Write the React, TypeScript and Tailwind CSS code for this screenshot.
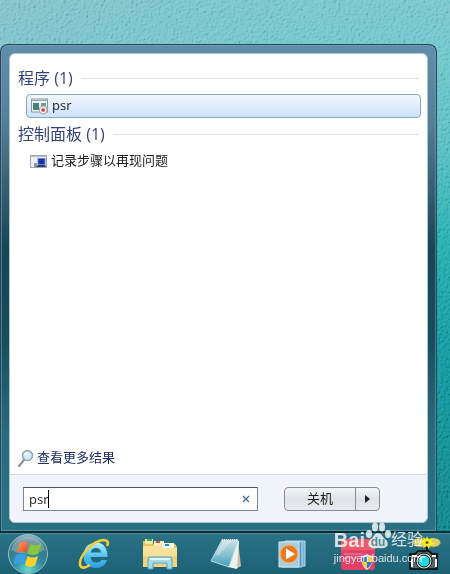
import { useState } from "react";

const cjk = "font-['Open_Sans','Noto_Sans_CJK_SC',sans-serif]";

function Wallpaper() {
  return (
    <svg aria-hidden="true" className="absolute inset-0 h-full w-full" preserveAspectRatio="none">
      <defs>
        <linearGradient id="sky" x1="0" y1="0" x2="0" y2="1">
          <stop offset="0" stopColor="#7cc6cb" />
          <stop offset="0.1" stopColor="#70c5ca" />
          <stop offset="0.25" stopColor="#58bdc2" />
          <stop offset="0.42" stopColor="#22abae" />
          <stop offset="0.6" stopColor="#0d949c" />
          <stop offset="1" stopColor="#087a80" />
        </linearGradient>
        <linearGradient id="haze" x1="0" y1="0" x2="1" y2="0">
          <stop offset="0" stopColor="#90bcc8" stopOpacity="0.4" />
          <stop offset="1" stopColor="#5cc8c8" stopOpacity="0.1" />
        </linearGradient>
        <filter id="grain" x="0" y="0" width="100%" height="100%">
          <feTurbulence type="fractalNoise" baseFrequency="0.4" numOctaves="3" seed="4" result="n" />
          <feDiffuseLighting in="n" surfaceScale="2.5" lightingColor="#b8b8b8">
            <feDistantLight azimuth="225" elevation="45" />
          </feDiffuseLighting>
        </filter>
      </defs>
      <rect width="100%" height="100%" fill="url(#sky)" />
      <rect width="100%" height="100%" fill="url(#haze)" />
      <rect width="100%" height="100%" filter="url(#grain)" opacity="0.6" className="mix-blend-soft-light" />
    </svg>
  );
}

function RecorderIcon() {
  return (
    <svg aria-hidden="true" viewBox="0 0 17 17" className="h-[17px] w-[17px] shrink-0">
      <rect x="0.5" y="1" width="16" height="13" fill="#f2f5f5" stroke="#8c989c" />
      <path d="M1 2.5h15" stroke="#9aa7ad" />
      <rect x="2" y="5" width="6" height="7" fill="#3f8579" />
      <path d="M10 5h5v3h-5z" fill="#63a096" />
      <circle cx="12.2" cy="12" r="4" fill="#f3eeee" stroke="#a7a1a2" />
      <circle cx="12.2" cy="12" r="1.8" fill="#d32f35" />
    </svg>
  );
}

function PanelIcon() {
  return (
    <svg aria-hidden="true" viewBox="0 0 17 15" className="h-[15px] w-[17px] shrink-0">
      <rect x="0.5" y="1.5" width="16" height="12" fill="#eceff4" stroke="#a1a7b2" />
      <path d="M1 2.5h15" stroke="#b4bac5" />
      <path d="M4 9h3v4H4z" fill="#8f98ab" />
      <rect x="8" y="4.5" width="7" height="6" fill="#1a2fb0" stroke="#6f86c9" />
      <path d="M6 13l2-2h7l1 2z" fill="#2c3867" />
    </svg>
  );
}

function StartOrb() {
  return (
    <svg aria-hidden="true" viewBox="0 0 42 42" className="h-[42px] w-[42px]">
      <defs>
        <radialGradient id="orb" cx="0.5" cy="0.9" r="0.95">
          <stop offset="0" stopColor="#62d8cf" />
          <stop offset="0.4" stopColor="#2f8b9c" />
          <stop offset="0.75" stopColor="#3f7686" />
          <stop offset="1" stopColor="#b7ced2" />
        </radialGradient>
        <linearGradient id="red" x1="0" y1="0" x2="1" y2="1">
          <stop offset="0" stopColor="#f9a071" />
          <stop offset="1" stopColor="#dc4716" />
        </linearGradient>
      </defs>
      <circle cx="21" cy="21" r="19.5" fill="url(#orb)" stroke="#8fbfc6" />
      <path d="M4 17a17.500 17.500 0 0 1 34 0q-17 8-34 0z" fill="#fff" opacity="0.25" />
      <path d="M12.500 10q5-3 9.500 0l-2.500 10q-5-3-10 0z" fill="url(#red)" />
      <path d="M23.500 11q5 3 11-0.500l-3 10q-5.500 3-10.500 0z" fill="#8cc63c" />
      <path d="M8.800 22q5-3 10.200 0l-2.500 9.500q-5-3-10 0z" fill="#3b9fe8" />
      <path d="M20.500 23q5 3 10.500 0l-3 9.500q-5 3-10-0.500z" fill="#ffd129" />
    </svg>
  );
}

function ExplorerE() {
  return (
    <svg aria-hidden="true" viewBox="0 0 32 34" className="h-[34px] w-8">
      <defs>
        <linearGradient id="ie" x1="0" y1="0" x2="0" y2="1">
          <stop offset="0" stopColor="#b9f0ff" />
          <stop offset="0.5" stopColor="#55c5f3" />
          <stop offset="1" stopColor="#2b9ee0" />
        </linearGradient>
      </defs>
      <path
        d="M29.500 20H12.500q0.500 5.500 6 5.500 3.500 0 5-2.500h5.500q-2.500 8-11 8Q5.500 30.500 5.500 18.500 6 6.500 18 5.500q11.500 0.500 11.500 14.500zM12.700 15.500h10.400q-0.700-4.600-5.200-4.600-4.400 0-5.200 4.600z"
        fill="url(#ie)"
      />
      <path
        d="M29.500 8q1.500-5-4-5Q18 3.500 9.500 12 0 22.500 2.500 29q2 3.500 8.500-0.500"
        fill="none"
        stroke="#f2cf36"
        strokeWidth="2.600"
        strokeLinecap="round"
      />
    </svg>
  );
}

function FolderIcon() {
  return (
    <svg aria-hidden="true" viewBox="0 0 36 34" className="h-[34px] w-9">
      <path d="M1 4h9l1 3h22l2 3v20H1z" fill="#e5c566" />
      <path d="M3 2h8v5H3z" fill="#f4e6a8" />
      <path d="M5 2h5v2H5z" fill="#42a636" />
      <path d="M12 4h10v5H12z" fill="#f8edc0" />
      <path d="M14 4h4v2h-4z" fill="#c8532e" />
      <path d="M20 6h12v6H20z" fill="#f3f7f2" />
      <path d="M23 7h4v2h-4z" fill="#2a8fa5" />
      <path d="M1 9h18l2 2h14v19H1z" fill="#f6e29a" />
      <path d="M1 19h34v11H1z" fill="#efd37c" />
      <path d="M6 32V22q0-2 2-2h20q2 0 2 2v10h-5v-6H11v6z" fill="#a5d9ec" stroke="#5aa5c8" />
      <path d="M8 22h20" stroke="#e3f7ff" strokeWidth="2" />
    </svg>
  );
}

function NotepadIcon() {
  return (
    <svg aria-hidden="true" viewBox="0 0 34 34" className="h-[34px] w-[34px]">
      <defs>
        <linearGradient id="pad" x1="0" y1="0" x2="0" y2="1">
          <stop offset="0" stopColor="#c9dfe5" />
          <stop offset="0.6" stopColor="#80bdcf" />
          <stop offset="1" stopColor="#3d9db8" />
        </linearGradient>
      </defs>
      <path d="M29 4l3 25-5 3-3-4z" fill="#c9bda4" />
      <path d="M27 4h3l-2 28-9-2z" fill="#eef1ee" />
      <path d="M13 3h16l-9 27L2 24z" fill="url(#pad)" stroke="#b8dbe4" />
      <path d="M14 4h9L9 19l-3-2z" fill="#fff" opacity="0.3" />
      <path d="M13 3h16" stroke="#e7eef0" strokeWidth="2" strokeDasharray="1 1" />
    </svg>
  );
}

function PlayerIcon() {
  return (
    <svg aria-hidden="true" viewBox="0 0 30 30" className="h-[30px] w-[30px]">
      <path d="M8 2h20v25H8z" fill="#73afd3" stroke="#b9dcef" />
      <path d="M5 3h20v25H5z" fill="#5796c3" stroke="#b9dcef" />
      <path d="M2 3h20v25H2z" fill="#a8cce0" stroke="#d3e8f3" />
      <circle cx="12" cy="15" r="9" fill="#e97a20" stroke="#f8b778" />
      <path d="M9 9.500v11l9-5.500z" fill="#fff" />
    </svg>
  );
}

function ToolkitIcon() {
  return (
    <svg aria-hidden="true" viewBox="0 0 36 34" className="h-[34px] w-9">
      <rect x="1" y="2" width="34" height="31" rx="3" fill="#df4169" />
      <path d="M1 5q0-3 3-3h28q3 0 3 3v8H1z" fill="#ed5b67" />
      <path d="M4 17h18M4 21h14" stroke="#f48da5" />
      <path d="M27 17q3 2 6 2 0 10-6 14-6-4-6-14 3 0 6-2z" fill="#e9edf0" />
      <path d="M27 19v6h-5q-1-2-0.500-4.500Q24 20.500 27 19zM27 25h5q-1 4-5 6.500z" fill="#3377c6" />
      <path d="M27 19q3 1.500 5.500 1.500V25H27zM22 25h5v6.500q-4-2.500-5-6.500z" fill="#f2cd3a" />
    </svg>
  );
}

function CameraIcon() {
  return (
    <svg aria-hidden="true" viewBox="0 0 34 36" className="h-9 w-[34px]">
      <path d="M20 9v10" stroke="#111" strokeWidth="2" />
      <ellipse cx="13.500" cy="6.500" rx="7.500" ry="4.500" fill="#d9d06c" stroke="#8e873a" strokeDasharray="2 1" />
      <ellipse cx="26" cy="6.500" rx="7.500" ry="4.500" fill="#d9d06c" stroke="#8e873a" strokeDasharray="2 1" />
      <path d="M20 0l2 4 4-2-2 4 4 2-5 1-1 4-2-3-4 2 1-4-4-2 4-2-1-3 3 2z" fill="#f7ee25" />
      <circle cx="20" cy="6.500" r="1.500" fill="#6b6200" />
      <path d="M3 18h5l3-3h11l3 3h5v15H3z" fill="#5a6668" stroke="#050505" strokeWidth="1.500" />
      <path d="M5 20h5M25 20h4M5 23v8M29 23v8" stroke="#f3f3f3" strokeWidth="2" />
      <circle cx="17" cy="25" r="8" fill="#dfe7e7" stroke="#111" />
      <circle cx="17" cy="25" r="6" fill="#22d8e0" stroke="#111" />
      <path d="M13 23q2-3 5-2" fill="none" stroke="#c4ffff" strokeWidth="1.500" />
    </svg>
  );
}

function GroupTitle({ name, count }: { name: string; count: number }) {
  return (
    <div className="flex items-center gap-2">
      <h2 className="text-base leading-6 text-[#33427a]">
        {name} ({count})
      </h2>
      <span className="h-px flex-1 bg-[#dfe2e6]" />
    </div>
  );
}

function Watermark() {
  return (
    <div className="pointer-events-none absolute right-[27px] bottom-2 font-['Liberation_Sans','Noto_Sans_CJK_SC',sans-serif] text-white/80">
      <div className="flex items-end">
        <span className="text-xl leading-5 font-bold">Bai</span>
        <span className="relative h-7 w-[26px]">
          <svg aria-hidden="true" viewBox="0 0 26 28" className="h-7 w-[26px] fill-current">
            <ellipse cx="4" cy="12" rx="3" ry="4" />
            <ellipse cx="10" cy="5" rx="3" ry="4.500" />
            <ellipse cx="17" cy="5" rx="3" ry="4.500" />
            <ellipse cx="23" cy="12" rx="3" ry="4" />
            <path d="M13 11q3 0 5 4l4 4q2 4-1 6-2 2-8 1-6 1-8-1-3-2-1-6l4-4q2-4 5-4z" />
          </svg>
          <span className="absolute inset-x-0 bottom-0 text-center text-xs leading-4 font-bold text-[#4f8d99]">du</span>
        </span>
        <span className="text-base leading-5">经验</span>
      </div>
      <div className="text-[11px] leading-4">jingyan.baidu.com</div>
    </div>
  );
}

const pinned = [
  { label: "Internet Explorer", icon: <ExplorerE /> },
  { label: "Windows Explorer", icon: <FolderIcon /> },
  { label: "Notepad", icon: <NotepadIcon /> },
  { label: "Media Player", icon: <PlayerIcon /> },
  { label: "Toolkit", icon: <ToolkitIcon /> },
  { label: "Camera", icon: <CameraIcon /> },
];

export default function App() {
  const [query, setQuery] = useState("psr");

  return (
    <div className={`relative flex min-h-screen flex-col overflow-hidden ${cjk}`}>
      <Wallpaper />

      <main className="relative mt-11 mr-[13px] flex flex-1 flex-col rounded-t-lg border border-b-0 border-[#24485a] bg-[linear-gradient(to_bottom,#628eac_0%,#56809a_15%,#3c6175_28%,#154654_42%,#174d5c_60%,#2a6b7e_80%,#2a7184_100%)] p-2 shadow-[inset_0_0_0_1px_#7fa9bd80]">
        <div className="flex flex-1 flex-col overflow-hidden rounded-md border border-[#a9c8d2] bg-white">
          <section className="flex flex-1 flex-col px-2 pt-3 pb-1">
            <GroupTitle name="程序" count={1} />
            <button className="mt-1 mr-[-2px] ml-2 flex h-6 items-center gap-1 rounded-sm border border-[#86a9bf] bg-linear-to-b from-[#f1f7fe] to-[#cde2fb] px-1 text-[13px] text-[#1c1c1c]">
              <RecorderIcon />
              psr
            </button>
            <div className="mt-1">
              <GroupTitle name="控制面板" count={1} />
            </div>
            <button className="mt-1 ml-2 flex h-[22px] items-center gap-1 px-1 text-[13px] text-[#1c1c1c]">
              <PanelIcon />
              记录步骤以再现问题
            </button>
            <a href="#more" className="mt-auto flex h-6 items-center gap-[3px] text-[13px] text-[#1d2c62]">
              <svg aria-hidden="true" viewBox="0 0 16 18" className="h-[18px] w-4">
                <path d="M6 11l-5 6" stroke="#8b8f98" strokeWidth="2" strokeLinecap="round" />
                <circle cx="9.500" cy="6.500" r="5" fill="#d9ecf8" stroke="#8ba3b8" strokeWidth="1.500" />
                <path d="M7 6q1-2.500 3-2.500" fill="none" stroke="#fff" strokeWidth="1.500" />
              </svg>
              查看更多结果
            </a>
          </section>

          <footer className="flex h-12 shrink-0 items-center border-t border-[#d5dbe6] bg-[#f1f4fb] pr-[47px] pl-[13px]">
            <form className="flex h-6 flex-1 items-center border border-[#7b8792] border-t-[#4c5560] bg-white px-[5px]">
              <div className="flex flex-1 items-center">
                <input
                  aria-label="搜索程序和文件"
                  value={query}
                  onChange={(e) => setQuery(e.target.value)}
                  className="field-sizing-content min-w-0 border-r border-black text-[13px] leading-[18px] text-[#222] outline-none"
                />
              </div>
              <button type="button" aria-label="清除" onClick={() => setQuery("")} className="flex w-3 justify-center">
                <svg aria-hidden="true" viewBox="0 0 8 8" className="h-2 w-2 stroke-[#47708d]">
                  <path d="M1 1l6 6M7 1L1 7" strokeWidth="1.300" />
                </svg>
              </button>
            </form>
            <div className="ml-[26px] flex h-6 w-24 rounded-sm border border-[#868c95] bg-linear-to-b from-[#f5f6f8] via-[#dfe2e6] via-50% to-[#e9ebef] text-[13px] text-[#1c1c1c]">
              <button className="flex-1">关机</button>
              <button aria-label="更多选项" className="flex w-6 items-center justify-center border-l border-[#868c95]">
                <svg aria-hidden="true" viewBox="0 0 5 8" className="h-2 w-[5px]">
                  <path d="M0 0l5 4-5 4z" fill="#222" />
                </svg>
              </button>
            </div>
          </footer>
        </div>
      </main>

      <nav className="relative flex h-[43px] shrink-0 items-center border-t-2 border-[#0c2b38] bg-linear-to-b from-[#2b7386] to-[#1d6175] shadow-[inset_0_1px_0_#4b8b9b]">
        <button aria-label="开始" className="flex w-14 shrink-0 justify-center">
          <StartOrb />
        </button>
        <div className="ml-[5px] flex">
          {pinned.map((p) => (
            <button key={p.label} aria-label={p.label} className="flex w-[66px] shrink-0 items-center justify-center">
              {p.icon}
            </button>
          ))}
        </div>
        <Watermark />
      </nav>
    </div>
  );
}
